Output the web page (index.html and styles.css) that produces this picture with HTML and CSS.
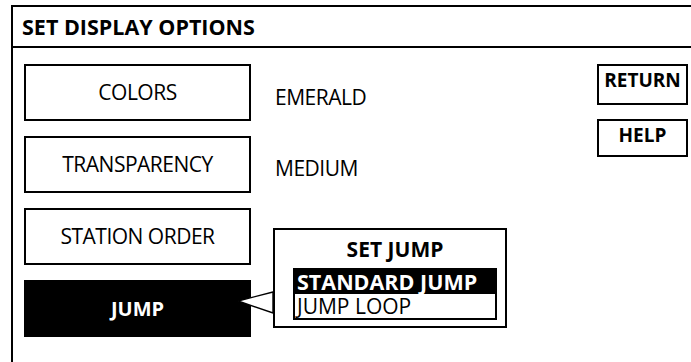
FILE: index.html
```html
<!DOCTYPE html>
<html>
<head>
<meta charset="utf-8">
<link rel="stylesheet" href="styles.css">
</head>
<body>
<div class="frame">
  <div class="header">SET DISPLAY OPTIONS</div>
  <div class="content">
    <div class="options">
      <div class="row">
        <div class="btn">COLORS</div>
        <div class="value v1">EMERALD</div>
      </div>
      <div class="row">
        <div class="btn">TRANSPARENCY</div>
        <div class="value v2">MEDIUM</div>
      </div>
      <div class="row">
        <div class="btn">STATION ORDER</div>
      </div>
      <div class="row">
        <div class="btn active">JUMP</div>
      </div>
    </div>
    <div class="side">
      <div class="sbtn">RETURN</div>
      <div class="sbtn">HELP</div>
    </div>
  </div>
  <svg class="pointer" width="40" height="26" viewBox="0 0 40 26">
    <polygon points="2,10 37,1 37,22" fill="#fff" stroke="#000" stroke-width="1.4"/>
  </svg>
  <div class="popup">
    <div class="popup-title">SET JUMP</div>
    <div class="list">
      <div class="item selected">STANDARD JUMP</div>
      <div class="item">JUMP LOOP</div>
    </div>
  </div>
</div>
</body>
</html>
```

FILE: styles.css
```css
html, body {
  margin: 0;
  padding: 0;
  background: #fff;
  overflow: hidden;
}
body {
  font-family: "Open Sans", "Noto Sans", sans-serif;
  color: #000;
}
.frame {
  position: relative;
  margin: 5px 0 0 11px;
  border-left: 2px solid #000;
  border-top: 2px solid #000;
  height: 400px;
}
.header {
  height: 39px;
  line-height: 40px;
  padding-left: 9px;
  font-size: 21.5px;
  font-weight: 700;
  border-bottom: 2px solid #000;
}
.content {
  display: flex;
  padding: 16px 0 0 11px;
}
.options {
  display: flex;
  flex-direction: column;
  gap: 15px;
  width: 573px;
}
.row {
  display: flex;
  align-items: flex-start;
}
.btn {
  box-sizing: border-box;
  width: 227px;
  height: 57px;
  border: 2px solid #000;
  display: flex;
  align-items: center;
  justify-content: center;
  font-size: 21px;
  letter-spacing: -0.5px;
  padding-bottom: 2px;
}
.btn.active {
  background: #000;
  color: #fff;
  font-weight: 700;
  letter-spacing: 0;
  font-size: 20px;
  padding-bottom: 0;
}
.value {
  margin-left: 24px;
  font-size: 21px;
  letter-spacing: -0.5px;
  line-height: 27px;
}
.v1 { margin-top: 20px; }
.v2 { margin-top: 19px; }
.side {
  display: flex;
  flex-direction: column;
  gap: 14px;
}
.sbtn {
  box-sizing: border-box;
  width: 91px;
  border: 2px solid #000;
  font-size: 19px;
  font-weight: 700;
  text-align: center;
  line-height: 22px;
  padding: 3px 0 12px;
}
.sbtn + .sbtn {
  padding-bottom: 9px;
}
.pointer {
  position: absolute;
  left: 223px;
  top: 284px;
}
.popup {
  position: absolute;
  left: 260px;
  top: 221px;
  box-sizing: border-box;
  width: 234px;
  height: 100px;
  border: 2px solid #000;
  background: #fff;
  padding: 6px 8px 0 18px;
}
.popup-title {
  text-align: center;
  font-size: 21px;
  font-weight: 700;
  line-height: 26px;
  height: 32px;
}
.list {
  border: 2px solid #000;
}
.item {
  font-size: 21px;
  line-height: 24px;
  height: 24px;
  padding-left: 2px;
  white-space: nowrap;
}
.item.selected {
  background: #000;
  color: #fff;
  font-weight: 700;
  font-size: 21.5px;
}
```
